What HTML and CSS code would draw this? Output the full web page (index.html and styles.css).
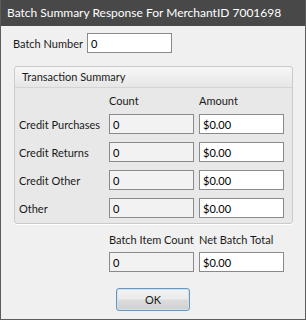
FILE: index.html
```html
<!DOCTYPE html>
<html>

<head>
	<title>Batch Summary Response</title>
	<link rel="stylesheet" href="styles.css">
</head>

<body>
	<div class="window">
		<div class="titlebar">Batch Summary Response For MerchantID 7001698</div>

		<div class="content">
			<div class="batch-row">
				<label class="batch-label">Batch Number</label>
				<input type="text" class="field plain" value="0">
			</div>

			<div class="groupbox">
				<div class="group-head">Transaction Summary</div>

				<div class="grid heads">
					<span></span>
					<span>Count</span>
					<span>Amount</span>
				</div>

				<div class="grid rows">
					<span>Credit Purchases</span>
					<input type="text" class="field readonly" value="0" readonly>
					<input type="text" class="field" value="$0.00">

					<span>Credit Returns</span>
					<input type="text" class="field readonly" value="0" readonly>
					<input type="text" class="field" value="$0.00">

					<span>Credit Other</span>
					<input type="text" class="field readonly" value="0" readonly>
					<input type="text" class="field" value="$0.00">

					<span>Other</span>
					<input type="text" class="field readonly" value="0" readonly>
					<input type="text" class="field" value="$0.00">
				</div>
			</div>

			<div class="grid totals-head">
				<span></span>
				<span>Batch Item Count</span>
				<span>Net Batch Total</span>
			</div>

			<div class="grid totals">
				<span></span>
				<input type="text" class="field readonly" value="0" readonly>
				<input type="text" class="field" value="$0.00">
			</div>

			<div class="actions">
				<button type="button" class="ok-btn">OK</button>
			</div>
		</div>
	</div>
</body>

</html>
```

FILE: styles.css
```css
* {
	box-sizing: border-box;
}

body {
	margin: 0;
	font-family: Lato, "Noto Sans", Arial, sans-serif;
	font-size: 11px;
	color: #1a1a1a;
	background-color: #f0f0f0;
	white-space: nowrap;
}

.window {
	width: 306px;
	height: 320px;
	overflow: hidden;
	background-color: #f0f0f0;
	border: 1px solid #5c5c5c;
	border-top: none;
}

.titlebar {
	height: 26px;
	margin: 0 -1px;
	padding-left: 7px;
	background-color: #484848;
	color: #ffffff;
	font-size: 12px;
	line-height: 26px;
}

.batch-row {
	display: flex;
	align-items: center;
	margin-top: 7px;
	padding-left: 12px;
}

.batch-label {
	width: 74px;
}

.field {
	width: 85px;
	height: 20px;
	padding: 0 3px;
	border: 1px solid #8a8a8a;
	background-color: #ffffff;
	font-family: inherit;
	font-size: 11px;
	color: #000000;
	outline: none;
}

.field.readonly {
	background-color: #f2f2f2;
}

.groupbox {
	margin: 13px 12px 0 13px;
	height: 158px;
	border: 1px solid #cbcbcb;
	border-radius: 3px;
	background-color: #e8e8e8;
	box-shadow: 0 1px 0 #ffffff;
}

.group-head {
	height: 21px;
	padding-left: 7px;
	line-height: 20px;
	border-bottom: 1px solid #d4d4d4;
	background: linear-gradient(#f7f7f7, #e6e6e6);
	border-radius: 3px 3px 0 0;
}

.grid {
	display: grid;
	grid-template-columns: 85px 85px 85px;
	column-gap: 5px;
	align-items: center;
	padding-left: 4px;
}

.heads {
	padding-top: 5px;
	line-height: 16px;
	margin-bottom: 5px;
}

.rows {
	row-gap: 8px;
}

.totals-head {
	margin-top: 8px;
	padding-left: 18px;
	line-height: 16px;
}

.totals {
	margin-top: 4px;
	padding-left: 18px;
}

.actions {
	display: flex;
	justify-content: center;
	margin-top: 16px;
}

.ok-btn {
	width: 74px;
	height: 23px;
	padding: 0;
	border: 1px solid #6f93b9;
	border-radius: 3px;
	background: linear-gradient(#f3f3f3 0%, #ebebeb 48%, #dcdcdc 52%, #d0d0d0 100%);
	box-shadow: inset 0 0 0 1px #c8e6f5;
	font-family: inherit;
	font-size: 11px;
	color: #1a1a1a;
	cursor: pointer;
}
```
